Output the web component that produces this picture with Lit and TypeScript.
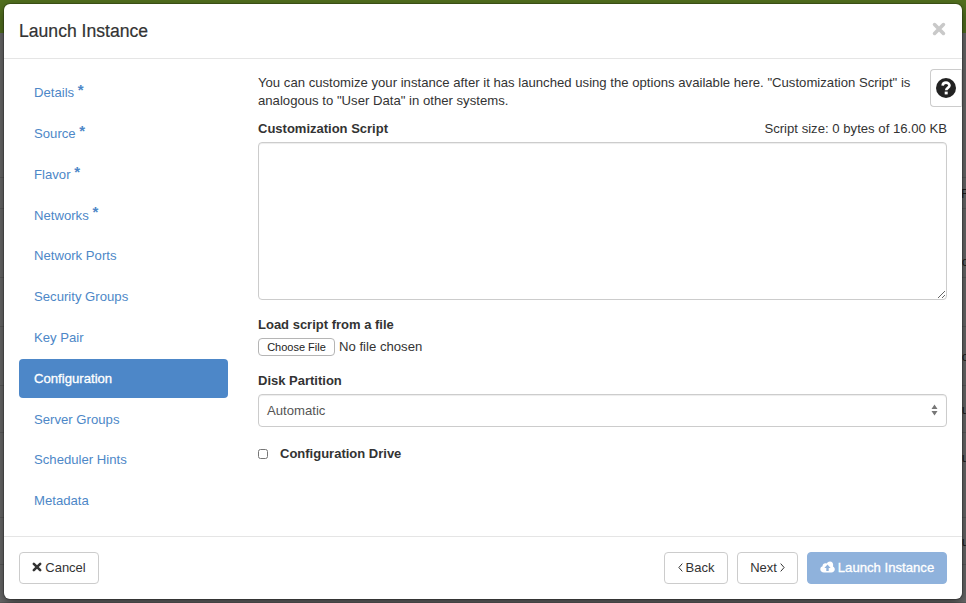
import { LitElement, html, css, svg } from 'lit';
import { customElement } from 'lit/decorators.js';

const timesIcon = svg`<path d="M2.2 2.2 L9.8 9.8 M9.8 2.2 L2.2 9.8" stroke="currentColor" stroke-width="3.1" stroke-linecap="round" fill="none"/>`;

const steps = [
  { name: 'Details', req: true },
  { name: 'Source', req: true },
  { name: 'Flavor', req: true },
  { name: 'Networks', req: true },
  { name: 'Network Ports' },
  { name: 'Security Groups' },
  { name: 'Key Pair' },
  { name: 'Configuration', active: true },
  { name: 'Server Groups' },
  { name: 'Scheduler Hints' },
  { name: 'Metadata' },
];

// rows of the page behind the dialog, only their ends show
const pageRows = [
  { h: 145, t: '' },
  { h: 31, t: 'F' },
  { h: 69, t: 'o', low: true },
  { h: 49, t: 'l', link: true },
  { h: 59, t: 'o' },
  { h: 47, t: 'u' },
  { h: 85, t: 'u', high: true },
  { h: 47, t: 'u' },
  { h: 38, t: '' },
];

@customElement('app-root')
export class AppRoot extends LitElement {

  static styles = css`
    :host{
      display:block;
      position:relative;
      width:966px;
      height:603px;
      overflow:hidden;
      font-family:"Liberation Sans",Arial,sans-serif;
      font-size:13.15px;
      color:#333;
      background:#6a6a6a
    }
    .page-top{
      height:33px;
      background:#52701f
    }
    .page-row{
      box-sizing:border-box;
      border-bottom:1px solid #5c5c5c;
      display:flex;
      justify-content:flex-end;
      align-items:center;
      color:#1e1e1e;
      font-size:13px
    }
    .page-row.low{
      align-items:flex-end;
      padding-bottom:8px
    }
    .page-row.high{
      align-items:flex-start;
      padding-top:17px
    }
    .page-row.link{
      color:#24507f
    }
    .page-row span{
      margin-right:-3px
    }
    .modal{
      position:absolute;
      left:4px;
      top:4px;
      width:958px;
      height:595px;
      box-sizing:border-box;
      display:flex;
      flex-direction:column;
      background:#fff;
      border-radius:6px;
      box-shadow:0 0 0 1px rgba(0,0,0,.2),0 4px 12px rgba(0,0,0,.5)
    }
    .header{
      height:55px;
      box-sizing:border-box;
      border-bottom:1px solid #e5e5e5;
      display:flex;
      justify-content:space-between;
      align-items:center;
      padding:1px 16px 0 15px
    }
    .header h4{
      margin:0;
      font-size:17.6px;
      font-weight:500;
      color:#333;
      -webkit-text-stroke:.2px #333
    }
    .close{
      width:14px;
      height:14px;
      color:#c9c9c9;
      display:block;
      margin-top:-6px
    }
    .body{
      flex:1;
      display:flex;
      gap:30px;
      padding:0 15px;
      position:relative
    }
    nav{
      width:209px;
      padding-top:14.3px
    }
    nav a{
      display:block;
      padding:10px 15px;
      margin-bottom:1.8px;
      line-height:19px;
      color:#4d87c7;
      border-radius:4px;
      white-space:nowrap
    }
    nav a.active{
      background:#4d87c8;
      color:#fff;
      -webkit-text-stroke:.3px #fff
    }
    nav a sup{
      font-size:15px;
      font-weight:bold;
      line-height:0;
      margin-left:0;
      position:relative;
      top:3px
    }
    .content{
      width:689px;
      padding-top:15px
    }
    .intro{
      margin:0 0 10px;
      line-height:18px;
      width:665px
    }
    .label-row{
      display:flex;
      justify-content:space-between;
      align-items:baseline;
      margin-bottom:4px;
      line-height:18px
    }
    label{
      font-weight:bold;
      font-size:13px
    }
    textarea{
      display:block;
      width:100%;
      height:158px;
      box-sizing:border-box;
      border:1px solid #ccc;
      border-radius:4px;
      box-shadow:inset 0 1px 1px rgba(0,0,0,.075);
      margin-bottom:16px;
      outline:none
    }
    .stack-label{
      display:block;
      line-height:18px;
      margin-bottom:4px
    }
    .file{
      display:flex;
      align-items:center;
      gap:4px;
      margin-bottom:16px;
      height:18px
    }
    .file span{
      margin-top:-1px
    }
    .file button{
      width:77px;
      height:18px;
      padding:0 0 1px;
      box-sizing:border-box;
      background:#fff;
      border:1px solid #b5b5b5;
      border-radius:4px;
      font-family:inherit;
      font-size:11px;
      color:#222
    }
    .select{
      position:relative;
      height:33px;
      box-sizing:border-box;
      border:1px solid #ccc;
      border-radius:4px;
      box-shadow:inset 0 1px 1px rgba(0,0,0,.075);
      padding:0 8px 1px;
      display:flex;
      align-items:center;
      justify-content:space-between;
      color:#555;
      margin-bottom:18px
    }
    .select svg{
      width:7px;
      height:12px;
      color:#777
    }
    .check{
      display:flex;
      align-items:center;
      gap:12px;
      line-height:18px
    }
    .check input{
      margin:-1px 0 0;
      width:10px;
      height:10px
    }
    .help{
      position:absolute;
      right:0;
      top:10px;
      width:32px;
      height:38px;
      box-sizing:border-box;
      border:1px solid #ccc;
      border-right-color:#e4e4e4;
      border-radius:4px 0 0 4px;
      background:#fff;
      display:flex;
      align-items:center;
      justify-content:center
    }
    .help svg{
      width:20px;
      height:20px
    }
    .footer{
      height:63px;
      box-sizing:border-box;
      border-top:1px solid #e5e5e5;
      display:flex;
      align-items:center;
      padding:0 15px
    }
    .btn{
      height:32px;
      box-sizing:border-box;
      background:#fff;
      border:1px solid #ccc;
      border-radius:4px;
      font-family:inherit;
      font-size:13px;
      color:#333;
      padding:0 0 2px;
      display:flex;
      align-items:center;
      justify-content:center;
      gap:3px
    }
    .btn svg{
      display:block
    }
    .cancel{
      width:80px
    }
    .cancel svg{
      width:10px;
      height:10px
    }
    .back{
      width:64px;
      margin-left:auto
    }
    .next{
      width:61px;
      margin-left:9px
    }
    .angle{
      width:5px;
      height:9px
    }
    .launch{
      width:140px;
      margin-left:9px;
      background:#8fb2dc;
      border-color:#8fb2dc;
      color:#fff;
      font-size:13.15px;
      -webkit-text-stroke:.3px #fff
    }
    .launch svg{
      width:15px;
      height:12px
    }
  `;

  render() {
    return html`
      <div class="page-top"></div>
      ${pageRows.map(r => html`
        <div class="page-row ${r.low ? 'low' : ''} ${r.high ? 'high' : ''} ${r.link ? 'link' : ''}" style="height:${r.h}px"><span>${r.t}</span></div>
      `)}
      <section class="modal">
        <header class="header">
          <h4>Launch Instance</h4>
          <svg class="close" viewBox="0 0 12 12">${timesIcon}</svg>
        </header>
        <div class="body">
          <nav>
            ${steps.map(s => html`
              <a class=${s.active ? 'active' : ''}>${s.name}${s.req ? html` <sup>*</sup>` : ''}</a>
            `)}
          </nav>
          <div class="content">
            <p class="intro">You can customize your instance after it has launched using the options available here. "Customization Script" is analogous to "User Data" in other systems.</p>
            <div class="label-row">
              <label>Customization Script</label>
              <span>Script size: 0 bytes of 16.00 KB</span>
            </div>
            <textarea></textarea>
            <label class="stack-label">Load script from a file</label>
            <div class="file"><button>Choose File</button><span>No file chosen</span></div>
            <label class="stack-label">Disk Partition</label>
            <div class="select">
              <span>Automatic</span>
              <svg viewBox="0 0 7 12"><path d="M3.5 0.5 L6.5 5 H0.5 Z M3.5 11.5 L0.5 7 H6.5 Z" fill="currentColor"/></svg>
            </div>
            <div class="check"><input type="checkbox"><label>Configuration Drive</label></div>
          </div>
          <div class="help">
            <svg viewBox="0 0 20 20">
              <circle cx="10" cy="10" r="10" fill="#222"/>
              <path d="M6.6 7.6 C6.8 5.6 8.2 4.6 10 4.6 C12 4.6 13.5 5.8 13.5 7.6 C13.5 9.8 10.2 10 10.2 12.2" stroke="#fff" stroke-width="2.6" fill="none"/>
              <rect x="8.7" y="13.6" width="3" height="2.8" fill="#fff"/>
            </svg>
          </div>
        </div>
        <footer class="footer">
          <button class="btn cancel"><svg viewBox="0 0 12 12">${timesIcon}</svg>Cancel</button>
          <button class="btn back"><svg class="angle" viewBox="0 0 5 9"><path d="M4.3 0.6 L0.9 4.5 L4.3 8.4" stroke="currentColor" fill="none"/></svg>Back</button>
          <button class="btn next">Next<svg class="angle" viewBox="0 0 5 9"><path d="M0.7 0.6 L4.1 4.5 L0.7 8.4" stroke="currentColor" fill="none"/></svg></button>
          <button class="btn launch">
            <svg viewBox="0 0 15 12">
              <path d="M4 11.5 C1.8 11.5 0.3 10 0.3 8.2 C0.3 6.7 1.2 5.6 2.5 5.2 C2.5 3.3 3.8 2.2 5.3 2.2 C5.9 2.2 6.3 2.4 6.7 2.6 C7.4 1.2 8.6 0.5 10 0.5 C12 0.5 13.3 2 13.2 4.2 C13 4.8 13 5 13 5.4 C14.1 6 14.8 7 14.8 8.3 C14.8 10.2 13.3 11.5 11.3 11.5 Z" fill="#fff"/>
              <path d="M7.5 3.6 L10.6 7 H8.7 V10 H6.3 V7 H4.4 Z" fill="#8fb2dc"/>
            </svg>
            Launch Instance
          </button>
        </footer>
      </section>
    `;
  }

}
